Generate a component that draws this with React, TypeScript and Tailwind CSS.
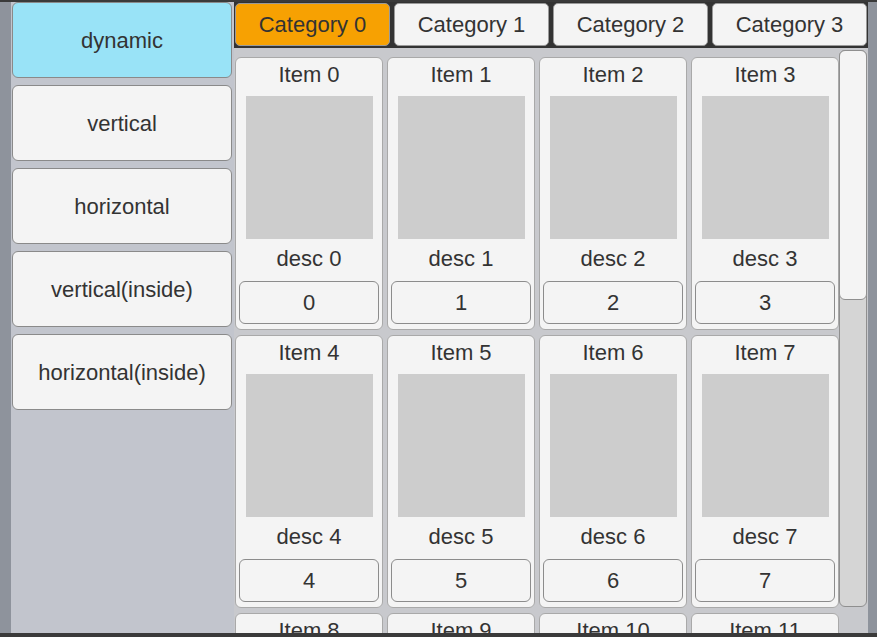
const modes = ["dynamic", "vertical", "horizontal", "vertical(inside)", "horizontal(inside)"];
const categories = ["Category 0", "Category 1", "Category 2", "Category 3"];
const items = Array.from({ length: 12 }, (_, i) => i);

function ItemCard({ index }: { index: number }) {
  return (
    <div className="flex flex-col items-center w-[148px] h-[273px] shrink-0 bg-[#f4f4f4] border border-[#a9a9a9] rounded-[6px] pt-[5px] px-[3px] pb-[5px]">
      <div className="h-[24px] leading-[24px] text-[22px]">Item {index}</div>
      <div className="mt-[9px] w-[127px] h-[143px] bg-[#cdcdcd]" />
      <div className="mt-[8px] h-[24px] leading-[24px] text-[22px]">desc {index}</div>
      <button className="mt-[10px] w-[140px] h-[43px] bg-[#f4f4f4] border border-[#8c8c8c] rounded-[6px] text-[22px] text-[#333] font-['Liberation_Sans',Arial,sans-serif]">
        {index}
      </button>
    </div>
  );
}

export default function App() {
  return (
    <div className="w-[877px] h-[637px] overflow-hidden bg-[#8e939c] border-t-2 border-b-4 border-[#3a3a3a] flex pl-[11px] text-[#333333] font-['Liberation_Sans',Arial,sans-serif]">
      {/* mode list */}
      <div className="w-[223px] h-full bg-[#c2c5cd] flex flex-col gap-[7px] pl-[1px] pr-[2px]">
        {modes.map((m, i) => (
          <button
            key={m}
            className={`h-[76px] w-full rounded-[6px] border border-[#8a8a8a] text-[22px] font-['Liberation_Sans',Arial,sans-serif] ${
              i === 0 ? "bg-[#99e3f7]" : "bg-[#f4f4f4]"
            }`}
          >
            {m}
          </button>
        ))}
      </div>

      <div className="w-[634px] h-full flex flex-col">
        {/* category tabs */}
        <div className="h-[46px] shrink-0 bg-[#333333] flex gap-[4px] pl-[1px] pt-[1px]">
          {categories.map((c, i) => (
            <button
              key={c}
              className={`w-[155px] h-[43px] rounded-[5px] border border-[#9a9a9a] text-[22px] font-['Liberation_Sans',Arial,sans-serif] ${
                i === 0 ? "bg-[#f7a102]" : "bg-[#f4f4f4]"
              }`}
            >
              {c}
            </button>
          ))}
        </div>

        {/* item grid + scrollbar */}
        <div className="flex-1 min-h-0 bg-[#c8c9cd] flex overflow-hidden">
          <div className="w-[605px] pl-[1px] pt-[9px] overflow-hidden">
            <div className="grid grid-cols-[repeat(4,148px)] gap-x-[4px] gap-y-[5px]">
              {items.map((i) => (
                <ItemCard key={i} index={i} />
              ))}
            </div>
          </div>
          <div className="w-[28px] pt-[2px] h-[559px]">
            <div className="relative h-full rounded-[6px] border border-[#8f8f8f] bg-[#d5d5d5]">
              <div className="absolute -left-px -top-px -right-px h-[250px] rounded-[6px] border border-[#8f8f8f] bg-[#f4f4f4]" />
            </div>
          </div>
        </div>
      </div>
    </div>
  );
}
